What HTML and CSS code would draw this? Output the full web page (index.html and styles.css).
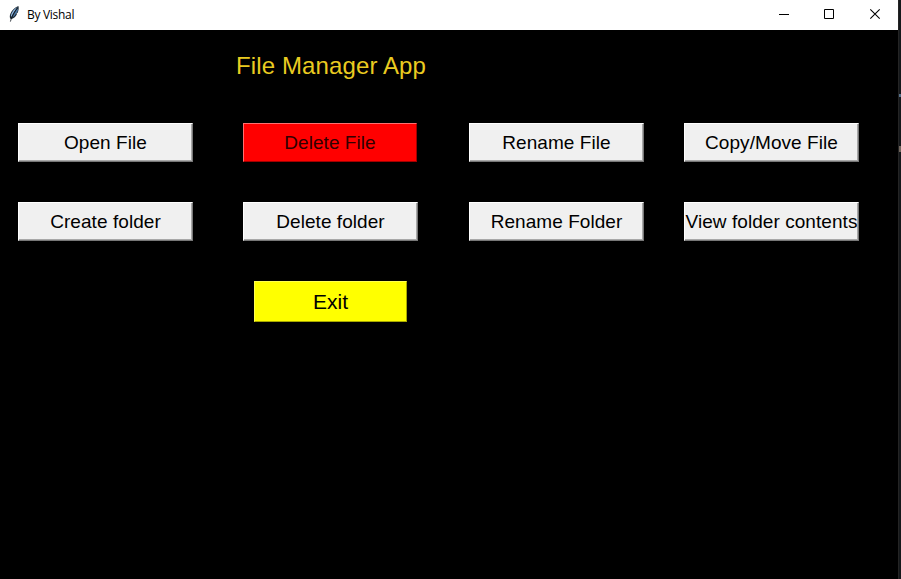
FILE: index.html
```html
<!DOCTYPE html>
<html lang="en">
<head>
<meta charset="utf-8">
<title>By Vishal</title>
<link rel="stylesheet" href="styles.css">
</head>
<body>
<div class="window">
  <header class="titlebar">
    <svg class="feather" width="12" height="18" viewBox="0 0 12 18">
      <path d="M10.400 1C7 2 4 5.200 2.500 8.600c-.9 2-.9 3.600-.2 5.200l1.200.2c2.400-.7 4.500-2.600 5.500-5l-.8-.2 1.500-1c.9-2.300 1.300-4.800.7-6.800z" fill="#1b2833"/>
      <path d="M9.600 1.900C6.200 3.500 3.600 7 2.900 10.200l.3 2C5 8.500 7 5.500 9.600 1.900z" fill="#8db4dc"/>
      <path d="M10 3.200c-2.200 2.500-4.200 5.700-5.600 9.200 1.700-.8 2.900-2.300 3.700-3.800l-.6-.2 1.600-.9c.7-1.300 1-2.900.9-4.300z" fill="#4c78a6"/>
      <path d="M9.300 3C6.300 6.800 3.500 11.500 2.400 16.600" fill="none" stroke="#101820" stroke-width=".8"/>
    </svg>
    <span class="caption">By Vishal</span>
    <svg class="controls" width="138" height="30" viewBox="0 0 138 30" fill="none" stroke="#000">
      <path d="M19 14.500h10M64.500 9.500h9v9h-9z"/>
      <path d="M110.300 9.300l9.400 9.400M119.700 9.300l-9.400 9.400" stroke-width="1.100"/>
    </svg>
  </header>
  <main class="content">
    <h1 class="heading">File Manager App</h1>
    <div class="actions">
      <button class="btn">Open File</button>
      <button class="btn danger">Delete File</button>
      <button class="btn">Rename File</button>
      <button class="btn">Copy/Move File</button>
      <button class="btn">Create folder</button>
      <button class="btn">Delete folder</button>
      <button class="btn">Rename Folder</button>
      <button class="btn">View folder contents</button>
    </div>
    <button class="btn exit">Exit</button>
  </main>
</div>
<aside class="edge"><i class="mark blue"></i><i class="mark tan"></i></aside>
</body>
</html>
```
FILE: styles.css
```css
body {
  margin: 0;
  display: flex;
  height: 579px;
  overflow: hidden;
  background: #000;
  font-family: "Liberation Sans", Arial, sans-serif;
}
.window { width: 898px; flex: none; }
.titlebar {
  display: flex;
  align-items: center;
  height: 30px;
  background: #fff;
}
.feather { margin: 0 0 2px 8px; }
.caption {
  margin-left: 7px;
  font: 12px/30px "Open Sans", sans-serif;
  letter-spacing: -0.3px;
  color: #000;
}
.controls { margin-left: auto; }
.content { padding: 20px 0 0 18px; }
.heading {
  margin: 0 0 41px 218px;
  font-size: 24px;
  font-weight: 400;
  line-height: 32px;
  letter-spacing: 0.12px;
  white-space: nowrap;
  color: #eacb20;
}
.actions {
  display: grid;
  grid-template-columns: 225px 226px 215px 175px;
  row-gap: 40px;
}
.btn {
  box-sizing: border-box;
  width: 175px;
  height: 39px;
  padding: 1px 0 0;
  display: flex;
  align-items: center;
  justify-content: center;
  border: 1px solid;
  border-color: #fff #777 #777 #fff;
  box-shadow: inset -1px -1px #a8a8a8;
  background: #f0f0f0;
  color: #000;
  font: 19px/22px "Liberation Sans", Arial, sans-serif;
  letter-spacing: 0.06px;
  white-space: nowrap;
}
.danger {
  background: #f00;
  border-color: #ff7070 #a00000 #a00000 #ff7070;
  box-shadow: none;
  color: #300000;
  width: 174px;
}
.exit {
  width: 153px;
  height: 41px;
  padding: 0;
  margin: 40px 0 0 236px;
  border-color: #ffff50 #a8a800 #a8a800 #ffff50;
  box-shadow: none;
  background: #ff0;
  font-size: 21px;
}
.edge {
  width: 3px;
  height: 579px;
  background: #15181b;
  border-left: 1px solid #242424;
  box-sizing: border-box;
}
.mark { display: block; width: 2px; }
.blue { height: 3px; margin-top: 94px; background: #56718a; }
.tan { height: 6px; margin-top: 49px; background: #71665d; }
```
